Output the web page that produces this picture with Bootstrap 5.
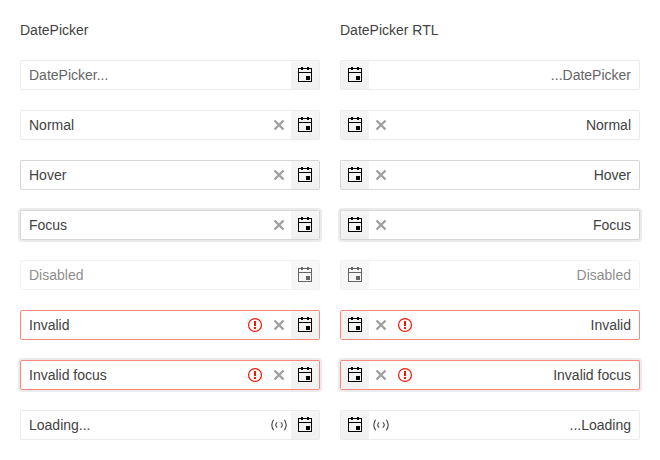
<!DOCTYPE html>
<html lang="en">
<head>
<meta charset="utf-8">
<title>DatePicker</title>
<link href="https://cdn.jsdelivr.net/npm/bootstrap@5.3.0/dist/css/bootstrap.min.css" rel="stylesheet">
<style>
body{font:14px/20px "Liberation Sans",Arial,sans-serif;color:#424242}
.demo-grid{display:grid;grid-template-columns:300px 300px;gap:20px;padding:20px}
.demo-grid>span{line-height:20px}
.picker{height:30px;border:1px solid rgba(0,0,0,.08);border-radius:2px;background:#fff}
.picker-text{padding:0 8px;line-height:28px}
.picker svg{width:16px;height:16px;display:block}
.slot{width:24px;height:28px}
.picker-btn{width:28px;height:28px;background:#f5f5f5 linear-gradient(rgba(0,0,0,0),rgba(0,0,0,.02));color:#000}
.is-empty .picker-text{color:#666}
.is-hover{border-color:rgba(0,0,0,.16)}
.is-focus{border-color:rgba(0,0,0,.16);box-shadow:0 0 0 2px rgba(0,0,0,.08)}
.is-off{opacity:.6}
.is-bad{border-color:#f9887f}
.clear-ico{color:#a0a0a0}.warn-ico{color:#f31700}.load-ico{color:#424242}
</style>
<script src="https://cdn.jsdelivr.net/npm/bootstrap@5.3.0/dist/js/bootstrap.bundle.min.js"></script>
</head>
<body>
<svg class="d-none">
<symbol id="cal" viewBox="0 0 16 16"><path fill="currentColor" fill-rule="evenodd" d="M1 1h3V0h2v1h4V0h2v1h3v14H1zM2 2v3h12V2h-2v1h-2V2H6v1H4V2zM2 6v8h12V6z"/><path fill="currentColor" d="M9 9h4v4H9z"/></symbol>
<symbol id="clear" viewBox="0 0 16 16"><path fill="none" stroke="currentColor" stroke-width="2.4" d="M3.5 3.5l9 9M12.5 3.5l-9 9"/></symbol>
<symbol id="warn" viewBox="0 0 16 16"><circle cx="8" cy="8" r="6.45" fill="none" stroke="currentColor" stroke-width="1.2"/><path fill="currentColor" d="M7 4h2v5H7zM7 10h2v2H7z"/></symbol>
<symbol id="load" viewBox="0 0 16 16"><path fill="none" stroke="currentColor" stroke-width="1.1" d="M2.6 2.8Q-1 8 2.6 13.2M13.4 2.8Q17 8 13.4 13.2M6.2 5.4Q3.2 8 6.2 10.6M9.8 5.4Q12.8 8 9.8 10.6"/></symbol>
</svg>
<main class="demo-grid" id="demo"><span>DatePicker</span><span>DatePicker RTL</span></main>
<script>
const rows=[["DatePicker...","is-empty",[]],["Normal","",["clear"]],["Hover","is-hover",["clear"]],["Focus","is-focus",["clear"]],["Disabled","is-off",[]],["Invalid","is-bad",["warn","clear"]],["Invalid focus","is-focus is-bad",["warn","clear"]],["Loading...","",["load"]]];
const icon=n=>`<svg><use href="#${n}"/></svg>`;
document.getElementById("demo").insertAdjacentHTML("beforeend",rows.map(([text,state,icons])=>["ltr","rtl"].map(dir=>`<div class="picker d-flex ${state}" dir="${dir}"><span class="picker-text flex-grow-1">${text}</span>${icons.map(n=>`<span class="slot ${n}-ico d-flex align-items-center justify-content-center">${icon(n)}</span>`).join("")}<span class="picker-btn d-flex align-items-center justify-content-center">${icon("cal")}</span></div>`).join("")).join(""));
</script>
</body>
</html>
